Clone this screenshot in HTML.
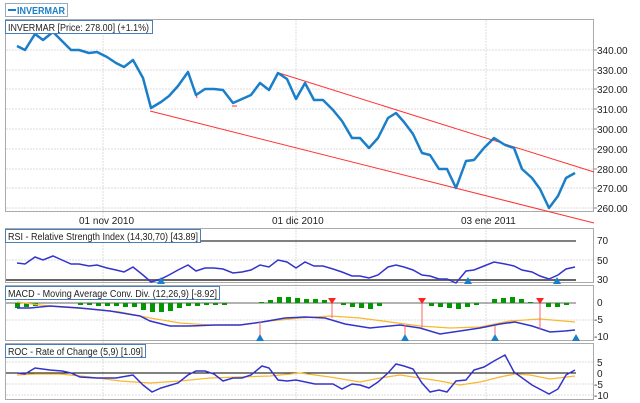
<!DOCTYPE html>
<html><head><meta charset="utf-8"><style>
html,body{margin:0;padding:0;background:#fff;}
svg{display:block;font-family:"Liberation Sans",sans-serif;}
</style></head><body>
<svg width="640" height="403" viewBox="0 0 640 403" xmlns="http://www.w3.org/2000/svg">
<rect width="640" height="403" fill="#fff"/>
<!-- legend -->
<rect x="5.5" y="3.5" width="62" height="13" fill="#fff" stroke="#9ab" />
<line x1="8" y1="10" x2="16" y2="10" stroke="#1a7fc8" stroke-width="2"/>
<text x="17" y="14" font-size="10.5" font-weight="bold" fill="#1a7fc8" textLength="48" lengthAdjust="spacingAndGlyphs">INVERMAR</text>

<!-- main panel -->
<g stroke="#ddd" stroke-dasharray="2,1" stroke-width="1">
<line x1="6" y1="50" x2="593" y2="50"/><line x1="6" y1="70" x2="593" y2="70"/><line x1="6" y1="89" x2="593" y2="89"/>
<line x1="6" y1="109" x2="593" y2="109"/><line x1="6" y1="129" x2="593" y2="129"/><line x1="6" y1="149" x2="593" y2="149"/>
<line x1="6" y1="169" x2="593" y2="169"/><line x1="6" y1="188" x2="593" y2="188"/><line x1="6" y1="208" x2="593" y2="208"/>
<line x1="103" y1="20" x2="103" y2="400"/><line x1="296" y1="20" x2="296" y2="400"/><line x1="486" y1="20" x2="486" y2="400"/>
</g>
<rect x="5.5" y="19.5" width="588" height="192" fill="none" stroke="#aaa"/>
<g stroke="#f33" stroke-width="1" fill="none">
<line x1="279" y1="73" x2="594" y2="172"/>
<line x1="150" y1="111" x2="594" y2="223"/>
<line x1="53" y1="28" x2="53" y2="34"/>
<line x1="232" y1="106" x2="237" y2="106"/>
<line x1="196" y1="94" x2="197" y2="98"/>
</g>
<polyline fill="none" stroke="#1a7fc8" stroke-width="2.5" stroke-linejoin="round" points="17,46 25,50 35,34 43,40 53,32 62,41 71,50 79,50 89,53 97,52 107,57 116,63 124,67 133,60 143,78 151,108 161,102 169,96 178,86 188,72 196,95 205,89 214,89 223,90 233,103 242,99 251,95 260,83 269,90 278,73 287,79 296,99 305,83 314,100 323,100 333,110 342,121 352,138 360,138 369,148 378,138 388,118 396,113 404,122 413,134 422,153 430,155 439,169 447,169 456,188 466,161 474,160 484,148 494,138 505,145 514,148 522,169 532,178 540,189 549,208 558,196 566,178 575,173"/>
<rect x="5.5" y="20.5" width="147" height="13" fill="#fff" stroke="#4a7ebb"/>
<text x="8" y="31" font-size="10" fill="#222" textLength="141" lengthAdjust="spacingAndGlyphs">INVERMAR [Price: 278.00] (+1.1%)</text>
<g font-size="10" fill="#222">
<text x="597" y="54">340.00</text><text x="597" y="74">330.00</text><text x="597" y="93">320.00</text>
<text x="597" y="113">310.00</text><text x="597" y="133">300.00</text><text x="597" y="153">290.00</text>
<text x="597" y="173">280.00</text><text x="597" y="192">270.00</text><text x="597" y="212">260.00</text>
<text x="79" y="224">01 nov 2010</text><text x="272" y="224">01 dic 2010</text><text x="461" y="224">03 ene 2011</text>
</g>
<g stroke="#888"><line x1="594" y1="50" x2="597" y2="50"/><line x1="594" y1="70" x2="597" y2="70"/><line x1="594" y1="89" x2="597" y2="89"/><line x1="594" y1="109" x2="597" y2="109"/><line x1="594" y1="129" x2="597" y2="129"/><line x1="594" y1="149" x2="597" y2="149"/><line x1="594" y1="169" x2="597" y2="169"/><line x1="594" y1="188" x2="597" y2="188"/><line x1="594" y1="208" x2="597" y2="208"/></g>

<!-- RSI -->
<g stroke="#ddd" stroke-dasharray="2,1"><line x1="6" y1="260" x2="593" y2="260"/></g>
<rect x="5.5" y="228.5" width="588" height="54" fill="none" stroke="#aaa"/>
<line x1="6" y1="241" x2="576" y2="241" stroke="#000"/>
<line x1="6" y1="280" x2="576" y2="280" stroke="#666" stroke-width="2"/>
<polyline fill="none" stroke="#33c" stroke-width="1.5" points="17,263 25,264 35,257 43,260 53,256 62,260 71,264 79,264 89,266 97,265 107,268 116,270 124,272 133,267 143,275 151,282 161,279 169,275 178,270 188,265 196,271 205,268 214,268 223,269 233,273 242,272 251,270 260,265 269,267 278,260 287,262 296,268 305,262 314,266 323,266 333,269 342,272 352,276 360,276 369,278 378,275 388,267 396,265 404,267 413,270 422,275 430,276 439,279 447,279 456,283 466,271 474,270 484,266 494,262 505,264 514,266 522,270 532,272 540,276 549,279 558,275 566,269 575,267"/>
<g fill="#1a7fc8"><path d="M157,284 l4,-7 l4,7z"/><path d="M464,284 l4,-7 l4,7z"/><path d="M553,284 l4,-7 l4,7z"/></g>
<rect x="5.5" y="229.5" width="195" height="13" fill="#fff" stroke="#4a7ebb"/>
<text x="8" y="240" font-size="10" fill="#222" textLength="190" lengthAdjust="spacingAndGlyphs">RSI - Relative Strength Index (14,30,70) [43.89]</text>
<g font-size="10" fill="#222"><text x="597" y="244">70</text><text x="597" y="264">50</text><text x="597" y="283">30</text></g>

<!-- MACD -->
<rect x="5.5" y="285.5" width="588" height="55" fill="none" stroke="#aaa"/>
<g stroke="#ddd" stroke-dasharray="2,1"><line x1="6" y1="320" x2="593" y2="320"/></g>
<line x1="6" y1="303" x2="576" y2="303" stroke="#666"/>
<g fill="#090">
<rect x="15" y="303" width="5" height="5"/><rect x="24" y="303" width="5" height="4"/><rect x="33" y="303" width="5" height="3"/>
<rect x="78" y="303" width="5" height="2"/><rect x="87" y="303" width="5" height="2"/><rect x="96" y="303" width="5" height="3"/><rect x="105" y="303" width="5" height="3"/><rect x="114" y="303" width="5" height="3"/><rect x="123" y="303" width="5" height="4"/><rect x="132" y="303" width="5" height="4"/><rect x="141" y="303" width="5" height="7"/><rect x="150" y="303" width="5" height="9"/><rect x="159" y="303" width="5" height="9"/><rect x="168" y="303" width="5" height="8"/><rect x="177" y="303" width="5" height="5"/><rect x="186" y="303" width="5" height="3"/><rect x="195" y="303" width="5" height="3"/><rect x="204" y="303" width="5" height="2"/><rect x="213" y="303" width="5" height="2"/><rect x="222" y="303" width="5" height="2"/>
<rect x="259" y="302" width="5" height="1"/><rect x="268" y="300" width="5" height="3"/><rect x="277" y="297" width="5" height="6"/><rect x="286" y="297" width="5" height="6"/><rect x="295" y="298" width="5" height="5"/><rect x="304" y="299" width="5" height="4"/><rect x="313" y="299" width="5" height="4"/><rect x="322" y="300" width="5" height="3"/>
<rect x="341" y="303" width="5" height="2"/><rect x="350" y="303" width="5" height="4"/><rect x="359" y="303" width="5" height="5"/><rect x="368" y="303" width="5" height="6"/><rect x="377" y="303" width="5" height="3"/>
<rect x="429" y="303" width="5" height="3"/><rect x="438" y="303" width="5" height="4"/><rect x="447" y="303" width="5" height="5"/><rect x="456" y="303" width="5" height="6"/><rect x="465" y="303" width="5" height="4"/><rect x="474" y="303" width="5" height="2"/>
<rect x="492" y="299" width="5" height="4"/><rect x="501" y="298" width="5" height="5"/><rect x="510" y="297" width="5" height="6"/><rect x="519" y="299" width="5" height="4"/><rect x="528" y="302" width="5" height="1"/>
<rect x="546" y="303" width="5" height="4"/><rect x="555" y="303" width="5" height="4"/><rect x="564" y="303" width="5" height="2"/>
</g>
<polyline fill="none" stroke="#f8b830" stroke-width="1.3" points="17,302 40,305 60,307 90,309 120,312 150,318 180,323 210,325 240,325 270,321 300,318 330,316 360,318 390,322 420,326 450,328 480,327 510,321 540,319 575,322"/>
<polyline fill="none" stroke="#33c" stroke-width="1.5" points="17,308 30,308 50,306 80,308 110,311 140,316 150,321 170,326 190,326 215,325 240,325 262,322 285,318 305,317 325,318 345,324 370,328 400,325 420,328 440,334 460,331 480,328 500,324 515,322 532,326 550,332 565,331 575,330"/>
<g stroke="#f66"><line x1="260" y1="322" x2="260" y2="338"/><line x1="332" y1="302" x2="332" y2="318"/><line x1="422" y1="302" x2="422" y2="328"/><line x1="540" y1="302" x2="540" y2="330"/><line x1="405" y1="325" x2="405" y2="338"/><line x1="495" y1="326" x2="495" y2="338"/></g>
<g fill="#f22"><path d="M328,298 l8,0 l-4,6z"/><path d="M418,298 l8,0 l-4,6z"/><path d="M536,298 l8,0 l-4,6z"/></g>
<g fill="#1a7fc8"><path d="M256,341 l4,-7 l4,7z"/><path d="M401,341 l4,-7 l4,7z"/><path d="M491,341 l4,-7 l4,7z"/><path d="M572,341 l4,-7 l4,7z"/></g>
<rect x="5.5" y="286.5" width="214" height="13" fill="#fff" stroke="#4a7ebb"/>
<text x="8" y="297" font-size="10" fill="#222" textLength="209" lengthAdjust="spacingAndGlyphs">MACD - Moving Average Conv. Div. (12,26,9) [-8.92]</text>
<g font-size="10" fill="#222"><text x="597" y="306">0</text><text x="594" y="323">-5</text><text x="594" y="340">-10</text></g>

<!-- ROC -->
<rect x="5.5" y="343.5" width="588" height="56" fill="none" stroke="#aaa"/>
<g stroke="#ddd" stroke-dasharray="2,1"><line x1="6" y1="362" x2="593" y2="362"/><line x1="6" y1="384" x2="593" y2="384"/><line x1="6" y1="395" x2="593" y2="395"/></g>
<line x1="6" y1="373" x2="576" y2="373" stroke="#000"/>
<polyline fill="none" stroke="#f8b830" stroke-width="1.3" points="17,375 35,374 60,374 90,377 120,381 150,383 180,381 210,378 240,377 270,376 300,373 330,377 360,382 380,378 400,375 420,378 440,381 460,385 480,382 500,377 515,374 530,375 550,379 575,376"/>
<polyline fill="none" stroke="#33c" stroke-width="1.5" points="17,373 25,374 35,368 50,370 62,371 71,373 80,377 97,378 116,378 133,375 143,385 152,392 161,388 178,383 188,375 196,371 205,371 214,374 223,381 233,378 242,378 251,375 262,366 269,368 278,380 287,381 296,380 315,384 333,384 342,389 352,384 360,385 369,388 378,382 388,373 396,364 404,366 413,369 422,383 430,392 439,390 447,392 456,381 466,380 474,370 484,367 494,361 505,355 514,372 532,385 549,394 558,389 566,375 575,370"/>
<rect x="5.5" y="344.5" width="140" height="13" fill="#fff" stroke="#4a7ebb"/>
<text x="8" y="355" font-size="10" fill="#222" textLength="135" lengthAdjust="spacingAndGlyphs">ROC - Rate of Change (5,9) [1.09]</text>
<g font-size="10" fill="#222"><text x="597" y="366">5</text><text x="597" y="377">0</text><text x="594" y="388">-5</text><text x="594" y="399">-10</text></g>
</svg>
</body></html>
